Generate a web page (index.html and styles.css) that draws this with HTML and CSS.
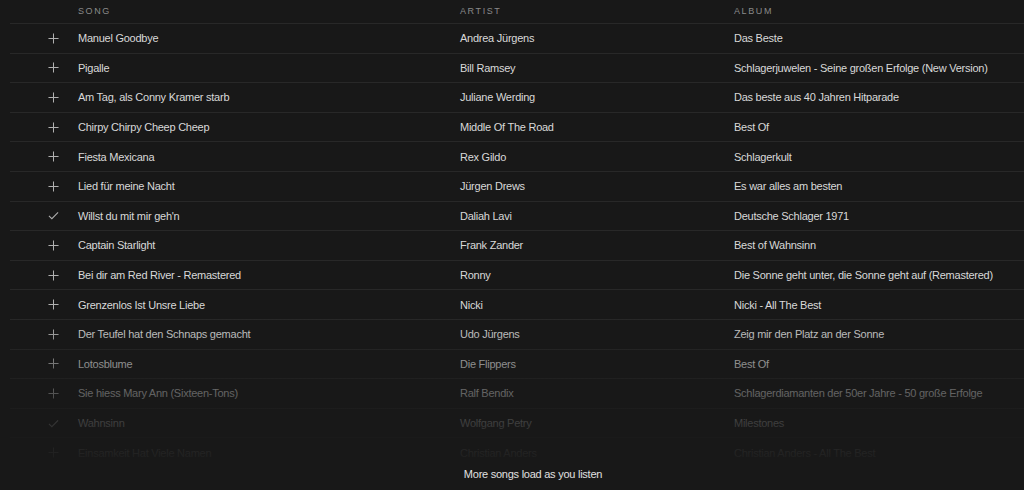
FILE: index.html
```html
<!DOCTYPE html>
<html>
<head>
<meta charset="utf-8">
<link rel="stylesheet" href="styles.css">
</head>
<body>
<div class="tracklist">
  <div class="row head">
    <div class="c-icon"></div>
    <div class="c-song">Song</div>
    <div class="c-artist">Artist</div>
    <div class="c-album">Album</div>
  </div>
  <div class="rows">
    <div class="row"><div class="c-icon"><svg class="ic" viewBox="0 0 12 12"><path d="M6 0.5V11.5M0.5 6H11.5"/></svg></div><div class="c-song">Manuel Goodbye</div><div class="c-artist">Andrea Jürgens</div><div class="c-album">Das Beste</div></div>
    <div class="row"><div class="c-icon"><svg class="ic" viewBox="0 0 12 12"><path d="M6 0.5V11.5M0.5 6H11.5"/></svg></div><div class="c-song">Pigalle</div><div class="c-artist">Bill Ramsey</div><div class="c-album">Schlagerjuwelen - Seine großen Erfolge (New Version)</div></div>
    <div class="row"><div class="c-icon"><svg class="ic" viewBox="0 0 12 12"><path d="M6 0.5V11.5M0.5 6H11.5"/></svg></div><div class="c-song">Am Tag, als Conny Kramer starb</div><div class="c-artist">Juliane Werding</div><div class="c-album">Das beste aus 40 Jahren Hitparade</div></div>
    <div class="row"><div class="c-icon"><svg class="ic" viewBox="0 0 12 12"><path d="M6 0.5V11.5M0.5 6H11.5"/></svg></div><div class="c-song">Chirpy Chirpy Cheep Cheep</div><div class="c-artist">Middle Of The Road</div><div class="c-album">Best Of</div></div>
    <div class="row"><div class="c-icon"><svg class="ic" viewBox="0 0 12 12"><path d="M6 0.5V11.5M0.5 6H11.5"/></svg></div><div class="c-song">Fiesta Mexicana</div><div class="c-artist">Rex Gildo</div><div class="c-album">Schlagerkult</div></div>
    <div class="row"><div class="c-icon"><svg class="ic" viewBox="0 0 12 12"><path d="M6 0.5V11.5M0.5 6H11.5"/></svg></div><div class="c-song">Lied für meine Nacht</div><div class="c-artist">Jürgen Drews</div><div class="c-album">Es war alles am besten</div></div>
    <div class="row"><div class="c-icon"><svg class="ic" viewBox="0 0 12 12"><path d="M1 6.5L4.2 9.5L11 2.5"/></svg></div><div class="c-song">Willst du mit mir geh'n</div><div class="c-artist">Daliah Lavi</div><div class="c-album">Deutsche Schlager 1971</div></div>
    <div class="row"><div class="c-icon"><svg class="ic" viewBox="0 0 12 12"><path d="M6 0.5V11.5M0.5 6H11.5"/></svg></div><div class="c-song">Captain Starlight</div><div class="c-artist">Frank Zander</div><div class="c-album">Best of Wahnsinn</div></div>
    <div class="row"><div class="c-icon"><svg class="ic" viewBox="0 0 12 12"><path d="M6 0.5V11.5M0.5 6H11.5"/></svg></div><div class="c-song">Bei dir am Red River - Remastered</div><div class="c-artist">Ronny</div><div class="c-album">Die Sonne geht unter, die Sonne geht auf (Remastered)</div></div>
    <div class="row"><div class="c-icon"><svg class="ic" viewBox="0 0 12 12"><path d="M6 0.5V11.5M0.5 6H11.5"/></svg></div><div class="c-song">Grenzenlos Ist Unsre Liebe</div><div class="c-artist">Nicki</div><div class="c-album">Nicki - All The Best</div></div>
    <div class="row"><div class="c-icon"><svg class="ic" viewBox="0 0 12 12"><path d="M6 0.5V11.5M0.5 6H11.5"/></svg></div><div class="c-song">Der Teufel hat den Schnaps gemacht</div><div class="c-artist">Udo Jürgens</div><div class="c-album">Zeig mir den Platz an der Sonne</div></div>
    <div class="row"><div class="c-icon"><svg class="ic" viewBox="0 0 12 12"><path d="M6 0.5V11.5M0.5 6H11.5"/></svg></div><div class="c-song">Lotosblume</div><div class="c-artist">Die Flippers</div><div class="c-album">Best Of</div></div>
    <div class="row"><div class="c-icon"><svg class="ic" viewBox="0 0 12 12"><path d="M6 0.5V11.5M0.5 6H11.5"/></svg></div><div class="c-song">Sie hiess Mary Ann (Sixteen-Tons)</div><div class="c-artist">Ralf Bendix</div><div class="c-album">Schlagerdiamanten der 50er Jahre - 50 große Erfolge</div></div>
    <div class="row"><div class="c-icon"><svg class="ic" viewBox="0 0 12 12"><path d="M1 6.5L4.2 9.5L11 2.5"/></svg></div><div class="c-song">Wahnsinn</div><div class="c-artist">Wolfgang Petry</div><div class="c-album">Milestones</div></div>
    <div class="row"><div class="c-icon"><svg class="ic" viewBox="0 0 12 12"><path d="M6 0.5V11.5M0.5 6H11.5"/></svg></div><div class="c-song">Einsamkeit Hat Viele Namen</div><div class="c-artist">Christian Anders</div><div class="c-album">Christian Anders - All The Best</div></div>
    <div class="fade"></div>
  </div>
  <div class="more">More songs load as you listen</div>
</div>
</body>
</html>
```
FILE: styles.css
```css
html, body {
  margin: 0;
  padding: 0;
  background: #181818;
  height: 490px;
  overflow: hidden;
}
body {
  font-family: "Liberation Sans", Arial, sans-serif;
  color: #d9d9d9;
  font-size: 11px;
  letter-spacing: -0.25px;
}
.tracklist {
  padding-left: 10px;
  position: relative;
  height: 490px;
}
.row {
  display: grid;
  grid-template-columns: 68px 382px 274px 1fr;
  align-items: center;
  height: 29.6px;
  box-sizing: border-box;
  border-bottom: 1px solid #282828;
  white-space: nowrap;
}
.row.head {
  height: 24px;
  font-size: 9px;
  letter-spacing: 1.6px;
  text-transform: uppercase;
  color: #8a8a8a;
  padding-bottom: 1px;
}
.c-icon {
  display: flex;
  justify-content: flex-end;
  padding-right: 19px;
}
.ic {
  width: 11px;
  height: 11px;
  fill: none;
  stroke: #b0b0b0;
  stroke-width: 1.1;
}
.rows {
  position: relative;
}
.fade {
  position: absolute;
  left: 0;
  right: 0;
  top: 290px;
  bottom: 0;
  background: linear-gradient(to bottom, rgba(24,24,24,0) 0%, rgba(24,24,24,0.3) 25%, rgba(24,24,24,0.6) 50%, rgba(24,24,24,0.88) 78%, #181818 100%);
  pointer-events: none;
}
.more {
  position: absolute;
  left: 42px;
  right: 0;
  top: 468px;
  text-align: center;
  color: #e0e0e0;
  font-size: 11px;
}
```
